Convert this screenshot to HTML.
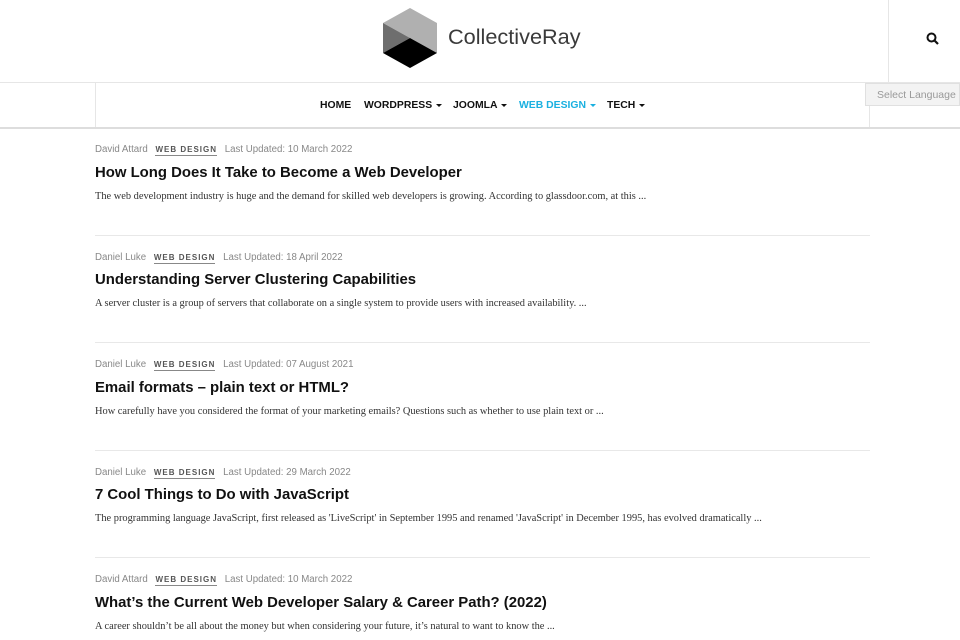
<!DOCTYPE html><html><head><style>
body{margin:0;width:960px;height:640px;overflow:hidden;background:#fff;font-family:"Liberation Sans",sans-serif;position:relative}
.a{position:absolute}
.nav a{position:absolute;top:100px;font-size:10.4px;font-weight:bold;color:#111;white-space:nowrap}
.nav i{display:inline-block;width:0;height:0;border-left:3px solid transparent;border-right:3px solid transparent;border-top:3px solid currentColor;vertical-align:middle;margin-left:4px}
.meta{position:absolute;left:95px;font-size:9.7px;color:#888;white-space:nowrap}
.meta b{color:#555;font-size:8px;letter-spacing:1px;border-bottom:1px solid #888;padding-bottom:1px;margin:0 5px 0 5px}
.t{position:absolute;left:95px;font-size:14.9px;font-weight:bold;color:#111;white-space:nowrap}
.e{position:absolute;left:95px;font-family:"Liberation Serif",serif;font-size:10.4px;color:#333;white-space:nowrap}
.hr{position:absolute;left:95px;width:775px;height:1px;background:#e8e8e8}
</style></head><body>
<svg class="a" style="left:0;top:0" width="960" height="130">
<polygon points="410,8 437,23 437,53 410,38 383,23" fill="#b0b0b0"/>
<polygon points="383,23 410,38 383,53" fill="#6e6e6e"/>
<polygon points="410,38 437,53 410,68 383,53" fill="#000"/>
<line x1="0" y1="82.5" x2="960" y2="82.5" stroke="#e6e6e6"/>
<line x1="888.5" y1="0" x2="888.5" y2="82" stroke="#e6e6e6"/>
<line x1="95.5" y1="83" x2="95.5" y2="128" stroke="#e6e6e6"/>
<line x1="869.5" y1="105" x2="869.5" y2="128" stroke="#e6e6e6"/>
<rect x="0" y="127" width="960" height="2" fill="#ddd"/>
<circle cx="931.5" cy="37.5" r="4" fill="none" stroke="#111" stroke-width="2"/>
<line x1="934.5" y1="40.5" x2="938" y2="44" stroke="#111" stroke-width="2.2"/>
</svg>
<div class="a" style="left:448px;top:24px;font-size:21.7px;color:#3a3a3a">CollectiveRay</div>
<div class="a" style="left:865px;top:83px;width:95px;height:23px;background:#f3f3f3;border:1px solid #e0e0e0;box-sizing:border-box;font-size:10.5px;color:#999;line-height:23px;padding-left:11px;white-space:nowrap;overflow:hidden">Select Language</div>
<div class="nav">
<a style="left:320px">HOME</a>
<a style="left:364px">WORDPRESS<i></i></a>
<a style="left:453px">JOOMLA<i></i></a>
<a style="left:519px;color:#1ab0e0">WEB DESIGN<i></i></a>
<a style="left:607px">TECH<i></i></a>
</div>

<div class="meta" style="top:144px">David Attard <b>WEB DESIGN</b> Last Updated: 10 March 2022</div>
<div class="t" style="top:165px">How Long Does It Take to Become a Web Developer</div>
<div class="e" style="top:191px">The web development industry is huge and the demand for skilled web developers is growing. According to glassdoor.com, at this ...</div>
<div class="hr" style="top:235px"></div>

<div class="meta" style="top:252px">Daniel Luke <b>WEB DESIGN</b> Last Updated: 18 April 2022</div>
<div class="t" style="top:272px">Understanding Server Clustering Capabilities</div>
<div class="e" style="top:298px">A server cluster is a group of servers that collaborate on a single system to provide users with increased availability. ...</div>
<div class="hr" style="top:342px"></div>

<div class="meta" style="top:359px">Daniel Luke <b>WEB DESIGN</b> Last Updated: 07 August 2021</div>
<div class="t" style="top:380px">Email formats – plain text or HTML?</div>
<div class="e" style="top:406px">How carefully have you considered the format of your marketing emails? Questions such as whether to use plain text or ...</div>
<div class="hr" style="top:450px"></div>

<div class="meta" style="top:467px">Daniel Luke <b>WEB DESIGN</b> Last Updated: 29 March 2022</div>
<div class="t" style="top:487px">7 Cool Things to Do with JavaScript</div>
<div class="e" style="top:513px">The programming language JavaScript, first released as 'LiveScript' in September 1995 and renamed 'JavaScript' in December 1995, has evolved dramatically ...</div>
<div class="hr" style="top:557px"></div>

<div class="meta" style="top:574px">David Attard <b>WEB DESIGN</b> Last Updated: 10 March 2022</div>
<div class="t" style="top:595px">What’s the Current Web Developer Salary &amp; Career Path? (2022)</div>
<div class="e" style="top:621px">A career shouldn’t be all about the money but when considering your future, it’s natural to want to know the ...</div>
</body></html>
